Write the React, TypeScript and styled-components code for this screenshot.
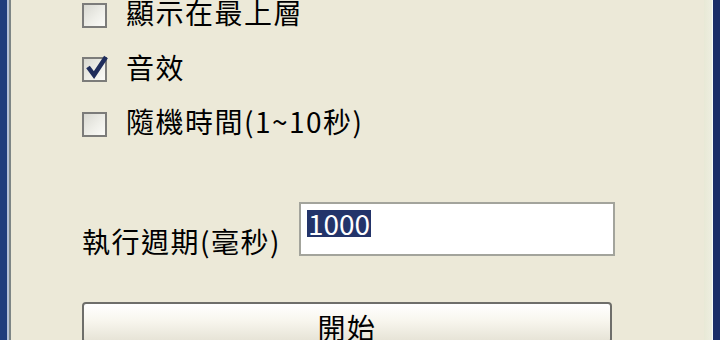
import React from "react";
import styled, { createGlobalStyle } from "styled-components";

const Global = createGlobalStyle`
  html, body { margin: 0; padding: 0; background: #ece9d8; }
  #root { width: 720px; height: 340px; overflow: hidden; }
`;

const Window = styled.div`
  display: flex;
  width: 720px;
  height: 340px;
  background: #ece9d8;
  font-family: "Noto Sans CJK TC", "Noto Sans CJK SC", sans-serif;
  color: #000;
  overflow: hidden;
`;

const LeftFrame = styled.div`
  flex: 0 0 11px;
  background: linear-gradient(
    to right,
    #1f3c7c 0, #1f3c7c 7px,
    #b4c0d6 7px, #b4c0d6 9px,
    #7e8686 9px, #7e8686 11px
  );
`;

const RightFrame = styled.div`
  flex: 0 0 16px;
  background: linear-gradient(
    to right,
    #e8e9d6 0, #eeeee0 8px,
    #f6f9f8 8px, #f6f9f8 9px,
    #1b2d68 9px, #1b2d68 16px
  );
`;

const Content = styled.div`
  flex: 1;
  display: flex;
  flex-direction: column;
  padding-left: 71px;
  padding-right: 86px;
`;

const OptionList = styled.div`
  display: flex;
  flex-direction: column;
  margin-top: -12px;
`;

const OptionRow = styled.label`
  display: flex;
  align-items: center;
  height: 54.5px;
  gap: 19px;
`;

const Box = styled.span`
  position: relative;
  flex: 0 0 auto;
  box-sizing: border-box;
  width: 25px;
  height: 25px;
  border: 2px solid #7c7c7a;
  background: linear-gradient(135deg, #d9d9d2 0%, #eeeee8 55%, #fbfbf8 100%);
`;

const Check = styled.svg`
  position: absolute;
  left: 2px;
  top: -5px;
  width: 22px;
  height: 26px;
`;

const LabelText = styled.span`
  font-size: 28px;
  line-height: 1;
  letter-spacing: 1.5px;
  margin-top: -6px;
  white-space: nowrap;
`;

const FieldRow = styled.div`
  display: flex;
  align-items: flex-end;
  gap: 18px;
  margin-top: 50px;
`;

const FieldLabel = styled.span`
  font-size: 28px;
  line-height: 1;
  letter-spacing: 1.5px;
  white-space: nowrap;
  margin-bottom: 1px;
`;

const Input = styled.div`
  box-sizing: border-box;
  width: 316px;
  height: 54px;
  border: 2px solid #a3a49c;
  background: #fff;
  padding: 6px 0 0 6px;
  font-size: 28px;
  line-height: 26px;
`;

const Selected = styled.span`
  display: inline-block;
  background: #23346a;
  color: #fff;
  padding: 0 1px;
  height: 27px;
  line-height: 27px;
`;

const Button = styled.button`
  box-sizing: border-box;
  margin-top: 46px;
  width: 530px;
  height: 52px;
  border: 2px solid #6e6e6a;
  border-radius: 4px;
  background: linear-gradient(to bottom, #ffffff 0%, #f8f6ee 45%, #e6e3d6 100%);
  font-family: "Noto Sans CJK TC", "Noto Sans CJK SC", sans-serif;
  font-size: 28px;
  letter-spacing: 1.5px;
  line-height: 1;
  color: #000;
  padding: 9px 0 0;
  display: flex;
  justify-content: center;
  align-items: flex-start;
`;

const Checkbox: React.FC<{ checked?: boolean }> = ({ checked }) => (
  <Box>
    {checked && (
      <Check viewBox="0 0 22 26">
        <path d="M2 13 L8 21 L20 3" fill="none" stroke="#1f2d5c" strokeWidth="4.5" strokeLinejoin="miter" />
      </Check>
    )}
  </Box>
);

export default function App() {
  return (
    <>
      <Global />
      <Window>
        <LeftFrame />
        <Content>
          <OptionList>
            <OptionRow>
              <Checkbox />
              <LabelText>顯示在最上層</LabelText>
            </OptionRow>
            <OptionRow>
              <Checkbox checked />
              <LabelText>音效</LabelText>
            </OptionRow>
            <OptionRow>
              <Checkbox />
              <LabelText>隨機時間(1~10秒)</LabelText>
            </OptionRow>
          </OptionList>
          <FieldRow>
            <FieldLabel>執行週期(毫秒)</FieldLabel>
            <Input>
              <Selected>1000</Selected>
            </Input>
          </FieldRow>
          <Button>開始</Button>
        </Content>
        <RightFrame />
      </Window>
    </>
  );
}
